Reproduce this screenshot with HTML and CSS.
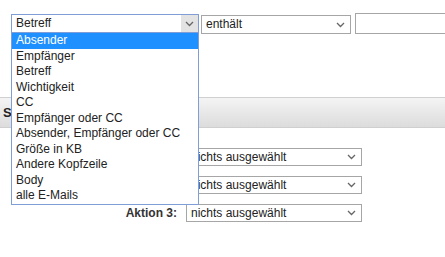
FILE: index.html
```html
<!DOCTYPE html>
<html lang="de">

<head>
    <meta charset="UTF-8">
    <title>Filterregel</title>
    <link rel="stylesheet" href="styles.css">
</head>

<body>
    <div class="rule">
        <div class="select focused">
            <span>Betreff</span>
            <span class="arrow-box">
                <svg width="9" height="6" viewBox="0 0 9 6"><path d="M1 1 L4.5 4.5 L8 1" fill="none" stroke="#666" stroke-width="1.3"/></svg>
            </span>
        </div>
        <div class="select op">
            <span>enthält</span>
            <svg class="chev" width="9" height="6" viewBox="0 0 9 6"><path d="M1 1 L4.5 4.5 L8 1" fill="none" stroke="#666" stroke-width="1.3"/></svg>
        </div>
        <input type="text" class="value">

        <ul class="dropdown">
            <li class="active">Absender</li>
            <li>Empfänger</li>
            <li>Betreff</li>
            <li>Wichtigkeit</li>
            <li>CC</li>
            <li>Empfänger oder CC</li>
            <li>Absender, Empfänger oder CC</li>
            <li>Größe in KB</li>
            <li>Andere Kopfzeile</li>
            <li>Body</li>
            <li>alle E-Mails</li>
        </ul>
    </div>

    <h2 class="band">Sonstiges</h2>

    <div class="actions">
        <label>Aktion 1:</label>
        <div class="select action">
            <span>nichts ausgewählt</span>
            <svg class="chev" width="9" height="6" viewBox="0 0 9 6"><path d="M1 1 L4.5 4.5 L8 1" fill="none" stroke="#666" stroke-width="1.3"/></svg>
        </div>
        <label>Aktion 2:</label>
        <div class="select action">
            <span>nichts ausgewählt</span>
            <svg class="chev" width="9" height="6" viewBox="0 0 9 6"><path d="M1 1 L4.5 4.5 L8 1" fill="none" stroke="#666" stroke-width="1.3"/></svg>
        </div>
        <label>Aktion 3:</label>
        <div class="select action">
            <span>nichts ausgewählt</span>
            <svg class="chev" width="9" height="6" viewBox="0 0 9 6"><path d="M1 1 L4.5 4.5 L8 1" fill="none" stroke="#666" stroke-width="1.3"/></svg>
        </div>
    </div>
</body>

</html>
```

FILE: styles.css
```css
* {
    padding: 0;
    margin: 0;
    box-sizing: border-box;
}

body {
    font-family: "Liberation Sans", Arial, sans-serif;
    font-size: 12px;
    color: #222;
    background: #fff;
    overflow: hidden;
}

.rule {
    position: relative;
    display: flex;
    align-items: flex-start;
    padding: 13px 0 0 11px;
}

.select {
    display: flex;
    flex-shrink: 0;
    align-items: center;
    justify-content: space-between;
    border: 1px solid #a6a6a6;
    background: #fff;
    padding-left: 4px;
    line-height: 15px;
}

.select.focused {
    margin-top: 1px;
    width: 188px;
    height: 19px;
    border-color: #7f9ed8;
}

.arrow-box {
    display: flex;
    align-items: center;
    justify-content: center;
    width: 17px;
    height: 17px;
    background: #e3e3e3;
}

.select.op {
    margin: 2px 0 0 2px;
    width: 150px;
    height: 19px;
    padding-right: 5px;
}

.value {
    flex-shrink: 0;
    margin-left: 4px;
    width: 110px;
    height: 21px;
    border: 1px solid #a6a6a6;
}

.dropdown {
    position: absolute;
    left: 11px;
    top: 32px;
    width: 188px;
    border: 1px solid #7f9ed8;
    background: #fff;
    list-style: none;
    z-index: 2;
}

.dropdown li {
    height: 15.5px;
    line-height: 15px;
    padding-left: 4px;
    white-space: nowrap;
}

.dropdown li.active {
    background: #1e90ff;
    color: #fff;
}

.band {
    margin-top: 63px;
    height: 31px;
    border-top: 1px solid #cfcfcf;
    border-bottom: 1px solid #cfcfcf;
    background: linear-gradient(#f4f4f4, #dcdcdc);
    padding-left: 3px;
    font-size: 13px;
    line-height: 29px;
    color: #222;
}

.actions {
    display: grid;
    grid-template-columns: 177px 176px;
    column-gap: 9px;
    row-gap: 10px;
    align-items: center;
    margin-top: 20px;
}

.actions label {
    text-align: right;
    font-weight: bold;
    color: #333;
}

.select.action {
    height: 18px;
    padding-right: 5px;
}
```
